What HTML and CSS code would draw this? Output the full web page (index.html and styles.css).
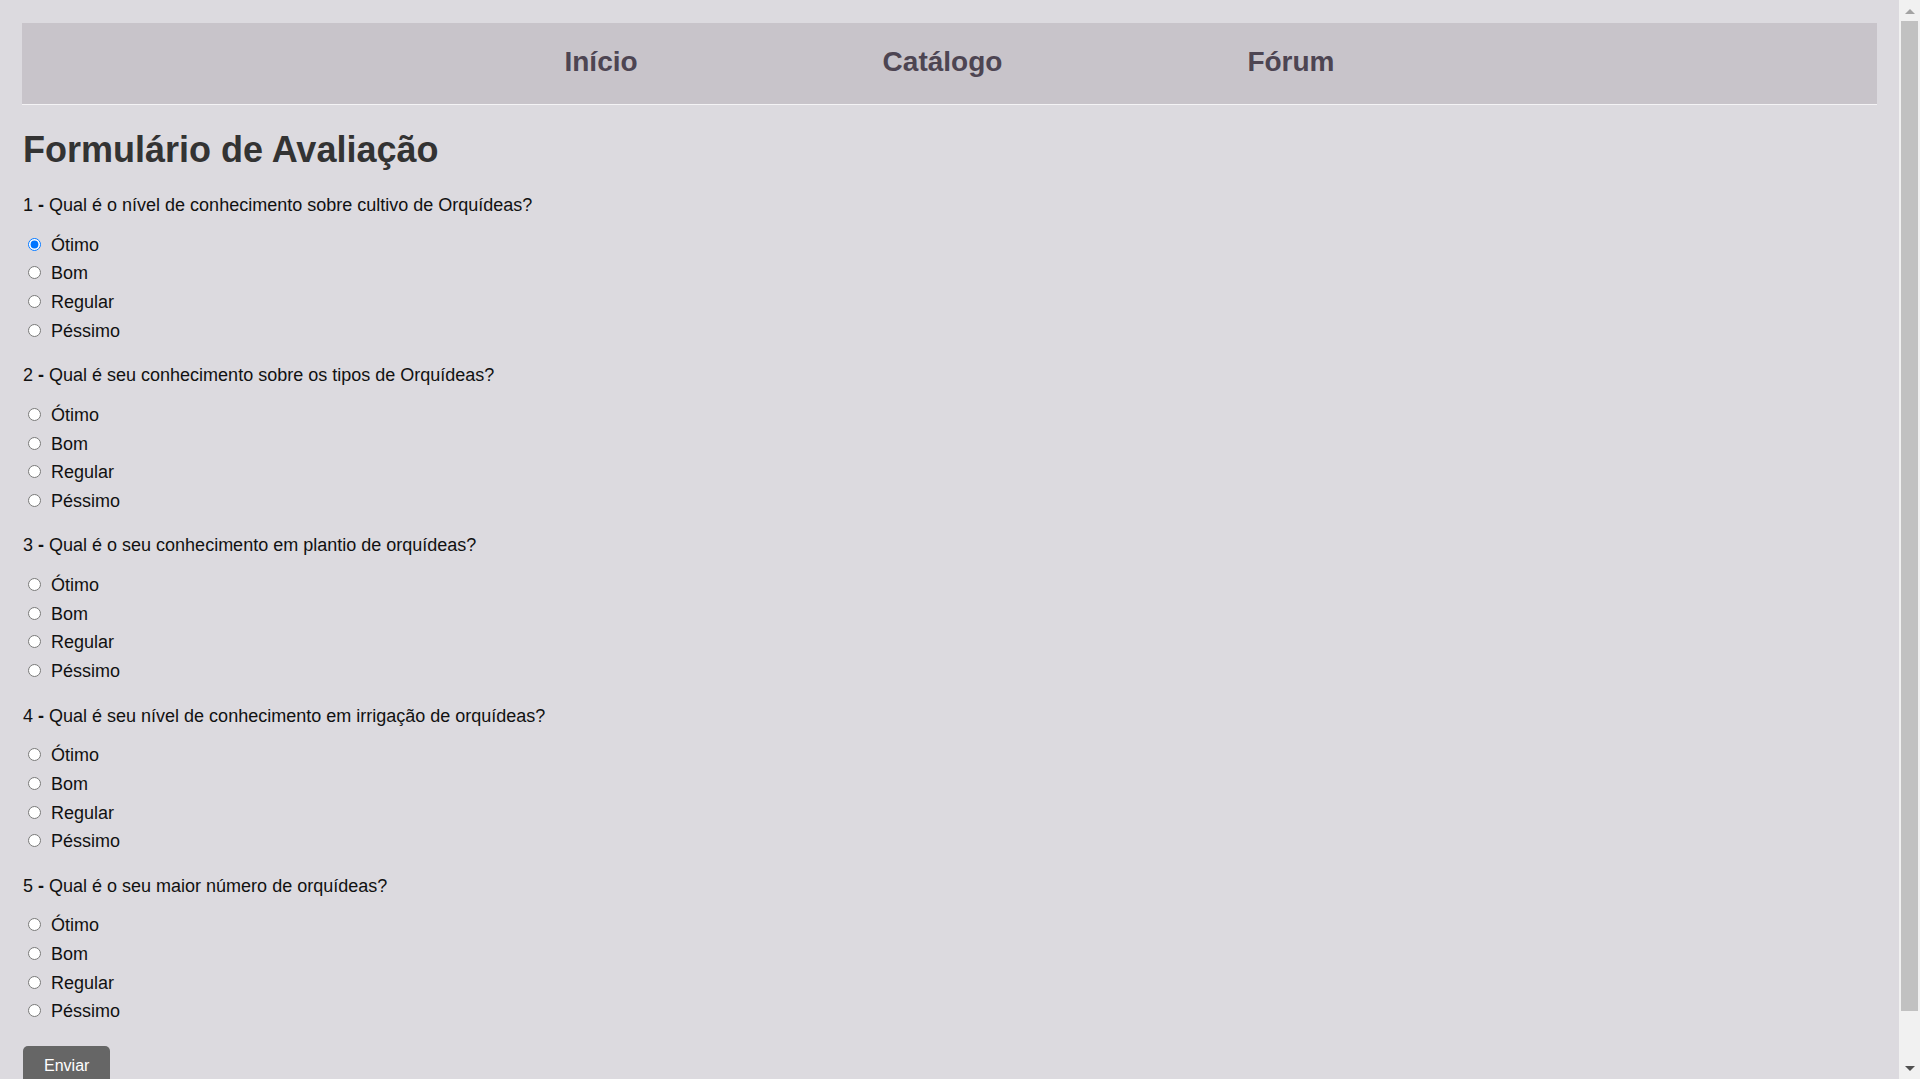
FILE: index.html
```html
<!DOCTYPE html>
<html lang="pt-BR">
<head>
<meta charset="utf-8">
<title>Formulário de Avaliação</title>
<link rel="stylesheet" href="styles.css">
</head>
<body>
<header class="topbar">
  <nav class="menu">
    <a class="menu-link" href="#">Início</a>
    <a class="menu-link" href="#">Catálogo</a>
    <a class="menu-link" href="#">Fórum</a>
  </nav>
</header>
<main class="content">
  <h1 class="title">Formulário de Avaliação</h1>
  <form class="survey">
    <div class="question">
      <p class="question-text">1 <b>-</b> Qual é o nível de conhecimento sobre cultivo de Orquídeas?</p>
      <div class="options">
        <label class="option"><input type="radio" name="q1" checked><span>Ótimo</span></label>
        <label class="option"><input type="radio" name="q1"><span>Bom</span></label>
        <label class="option"><input type="radio" name="q1"><span>Regular</span></label>
        <label class="option"><input type="radio" name="q1"><span>Péssimo</span></label>
      </div>
    </div>
    <div class="question">
      <p class="question-text">2 <b>-</b> Qual é seu conhecimento sobre os tipos de Orquídeas?</p>
      <div class="options">
        <label class="option"><input type="radio" name="q2"><span>Ótimo</span></label>
        <label class="option"><input type="radio" name="q2"><span>Bom</span></label>
        <label class="option"><input type="radio" name="q2"><span>Regular</span></label>
        <label class="option"><input type="radio" name="q2"><span>Péssimo</span></label>
      </div>
    </div>
    <div class="question">
      <p class="question-text">3 <b>-</b> Qual é o seu conhecimento em plantio de orquídeas?</p>
      <div class="options">
        <label class="option"><input type="radio" name="q3"><span>Ótimo</span></label>
        <label class="option"><input type="radio" name="q3"><span>Bom</span></label>
        <label class="option"><input type="radio" name="q3"><span>Regular</span></label>
        <label class="option"><input type="radio" name="q3"><span>Péssimo</span></label>
      </div>
    </div>
    <div class="question">
      <p class="question-text">4 <b>-</b> Qual é seu nível de conhecimento em irrigação de orquídeas?</p>
      <div class="options">
        <label class="option"><input type="radio" name="q4"><span>Ótimo</span></label>
        <label class="option"><input type="radio" name="q4"><span>Bom</span></label>
        <label class="option"><input type="radio" name="q4"><span>Regular</span></label>
        <label class="option"><input type="radio" name="q4"><span>Péssimo</span></label>
      </div>
    </div>
    <div class="question">
      <p class="question-text">5 <b>-</b> Qual é o seu maior número de orquídeas?</p>
      <div class="options">
        <label class="option"><input type="radio" name="q5"><span>Ótimo</span></label>
        <label class="option"><input type="radio" name="q5"><span>Bom</span></label>
        <label class="option"><input type="radio" name="q5"><span>Regular</span></label>
        <label class="option"><input type="radio" name="q5"><span>Péssimo</span></label>
      </div>
    </div>
    <button class="submit" type="submit">Enviar</button>
  </form>
</main>
<div class="fake-scrollbar" aria-hidden="true">
  <span class="arrow arrow-up"></span>
  <span class="thumb"></span>
  <span class="arrow arrow-down"></span>
</div>
</body>
</html>
```

FILE: styles.css
```css
html {
  background: #dcdadf;
}
body {
  margin: 0;
  padding: 23px 43px 45px 23px;
  font-family: "Liberation Sans", Arial, sans-serif;
  font-size: 18px;
  color: #111;
  background: #dcdadf;
}
.topbar {
  background: #c8c4ca;
  height: 81px;
  margin-left: -1px;
  border-bottom: 1px solid #f4f3f5;
  display: flex;
  align-items: center;
  justify-content: center;
}
.menu {
  display: flex;
  gap: 245px;
  margin-top: -4px;
}
.menu-link {
  font-size: 28px;
  font-weight: bold;
  color: #4d4552;
  text-decoration: none;
}
.title {
  font-size: 36px;
  font-weight: bold;
  color: #333;
  margin: 25px 0 23px;
  line-height: 40px;
}
.question {
  margin-bottom: 17.8px;
}
.question-text {
  margin: 0 0 14px;
  line-height: 24px;
}
.options {
  display: flex;
  flex-direction: column;
}
.option {
  display: flex;
  align-items: center;
  height: 28.6px;
}
.option input {
  width: 13px;
  height: 13px;
  margin: 0 10px 2px 5px;
}
.submit {
  margin-top: 2px;
  background: #666;
  color: #fff;
  border: none;
  border-radius: 5px;
  font-family: "Liberation Sans", Arial, sans-serif;
  font-size: 16px;
  padding: 10px 21px;
  line-height: 19px;
  cursor: pointer;
}
.fake-scrollbar {
  position: fixed;
  top: 0;
  right: 0;
  width: 21px;
  height: 100vh;
  background: #f1f1f1;
  display: flex;
  flex-direction: column;
  align-items: center;
}
.thumb {
  width: 17px;
  margin: 4px 0 0;
  height: 990px;
  background: #c1c1c1;
}
.arrow {
  width: 0;
  height: 0;
  border-left: 5px solid transparent;
  border-right: 5px solid transparent;
}
.arrow-up {
  margin-top: 9px;
  border-bottom: 5px solid #a3a3a3;
  margin-bottom: 3px;
}
.arrow-down {
  margin-top: 55px;
  border-top: 5px solid #505050;
}
```
